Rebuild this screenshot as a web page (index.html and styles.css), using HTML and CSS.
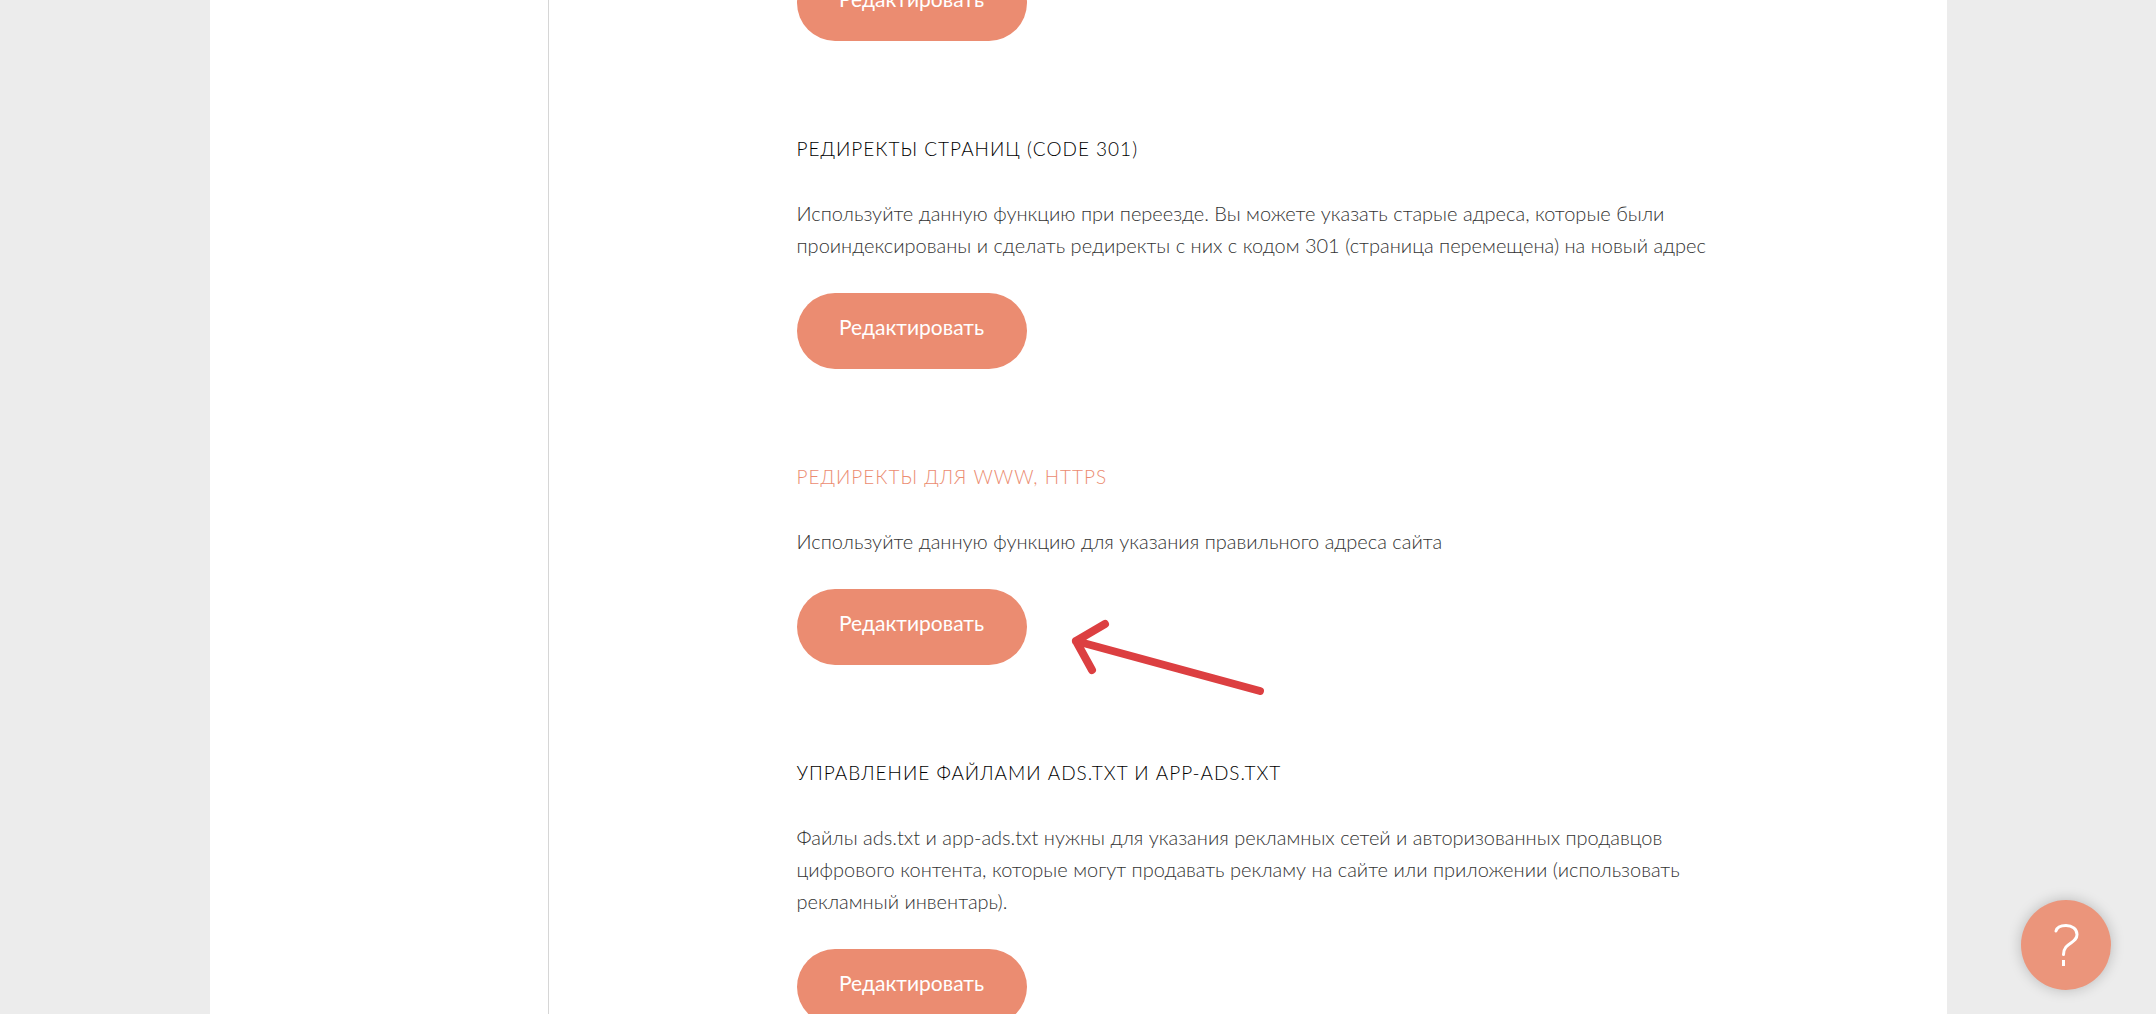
FILE: index.html
```html
<!DOCTYPE html>
<html lang="ru">
<head>
    <meta charset="UTF-8">
    <title>Настройки сайта</title>
    <link rel="stylesheet" href="styles.css">
</head>
<body>
    <div class="page">
        <div class="panel">
            <aside class="sidebar"></aside>
            <main class="settings">
                <section class="setting">
                    <button class="edit-button" type="button">Редактировать</button>
                </section>

                <section class="setting">
                    <h2>Редиректы страниц (code 301)</h2>
                    <p>
                        Используйте данную функцию при переезде. Вы можете указать старые адреса, которые были<br>
                        проиндексированы и сделать редиректы с них с кодом 301 (страница перемещена) на новый адрес
                    </p>
                    <button class="edit-button" type="button">Редактировать</button>
                </section>

                <section class="setting active">
                    <h2>Редиректы для www, https</h2>
                    <p>Используйте данную функцию для указания правильного адреса сайта</p>
                    <button class="edit-button" type="button">Редактировать</button>
                    <svg class="arrow" width="200" height="84" viewBox="0 0 200 84" fill="none">
                        <path d="M189 58L5 8M34 -9L5 8L21 37" />
                    </svg>
                </section>

                <section class="setting">
                    <h2>Управление файлами ads.txt и app-ads.txt</h2>
                    <p>
                        Файлы ads.txt и app-ads.txt нужны для указания рекламных сетей и авторизованных продавцов<br>
                        цифрового контента, которые могут продавать рекламу на сайте или приложении (использовать<br>
                        рекламный инвентарь).
                    </p>
                    <button class="edit-button" type="button">Редактировать</button>
                </section>
            </main>
        </div>

        <button class="help-button" type="button" aria-label="Помощь">
            <svg width="90" height="90" viewBox="0 0 90 90" fill="none">
                <path d="M35 31C36 27 40 25.500 45 25.500C51 25.500 56 29 56 34.500C56 44 42.500 42 42.500 54.500" stroke-linecap="round" />
                <path d="M42.500 60V66" />
            </svg>
        </button>
    </div>
</body>
</html>
```
FILE: styles.css
```css
:root {
    --bg-color: #ececec;
    --accent-color: #eb8c71;
    --text-color: #333;
    --arrow-color: #dc3f41;
}
* {
    box-sizing: border-box;
}
body {
    margin: 0;
    background-color: #fff;
    font-family: Lato, "Open Sans", sans-serif;
    overflow: hidden;
}
.page {
    height: calc(100vh - 1px);
    overflow: hidden;
    background-color: var(--bg-color);
}
.panel {
    display: grid;
    grid-template-columns: 339px 1fr;
    max-width: 1737px;
    min-height: 100%;
    margin: 0 auto;
    background-color: #fff;
}
.sidebar {
    border-right: 1px solid #d6d6d6;
}

/* the list is scrolled: the first button is partly above the window */
.settings {
    margin-top: -35px;
    padding-left: 248px;
}
.setting {
    position: relative;
    padding-bottom: 92px;
}
.setting h2 {
    margin: 0 0 32px;
    font-size: 19px;
    line-height: 32px;
    font-weight: 300;
    letter-spacing: 1px;
    text-transform: uppercase;
    color: #000;
}
.setting p {
    margin: 0 0 32px;
    font-size: 20px;
    line-height: 32px;
    font-weight: 300;
    color: var(--text-color);
}
.setting.active h2 {
    color: var(--accent-color);
}
.edit-button {
    display: block;
    width: 230px;
    height: 76px;
    padding: 0 0 10px;
    border: 0;
    border-radius: 38px;
    background-color: var(--accent-color);
    color: #fff;
    font-family: inherit;
    font-size: 21px;
    cursor: pointer;
}
.arrow {
    position: absolute;
    left: 274px;
    bottom: 40px;
    overflow: visible;
    stroke: var(--arrow-color);
    stroke-width: 8;
    stroke-linecap: round;
    stroke-linejoin: round;
}

.help-button {
    position: fixed;
    right: 45px;
    bottom: 25px;
    width: 90px;
    height: 90px;
    padding: 0;
    border: 0;
    border-radius: 50%;
    background-color: #eb957b;
    box-shadow: 0 0 14px rgba(0, 0, 0, 0.22);
    cursor: pointer;
}
.help-button svg {
    display: block;
    stroke: #fff;
    stroke-width: 3;
}
```
